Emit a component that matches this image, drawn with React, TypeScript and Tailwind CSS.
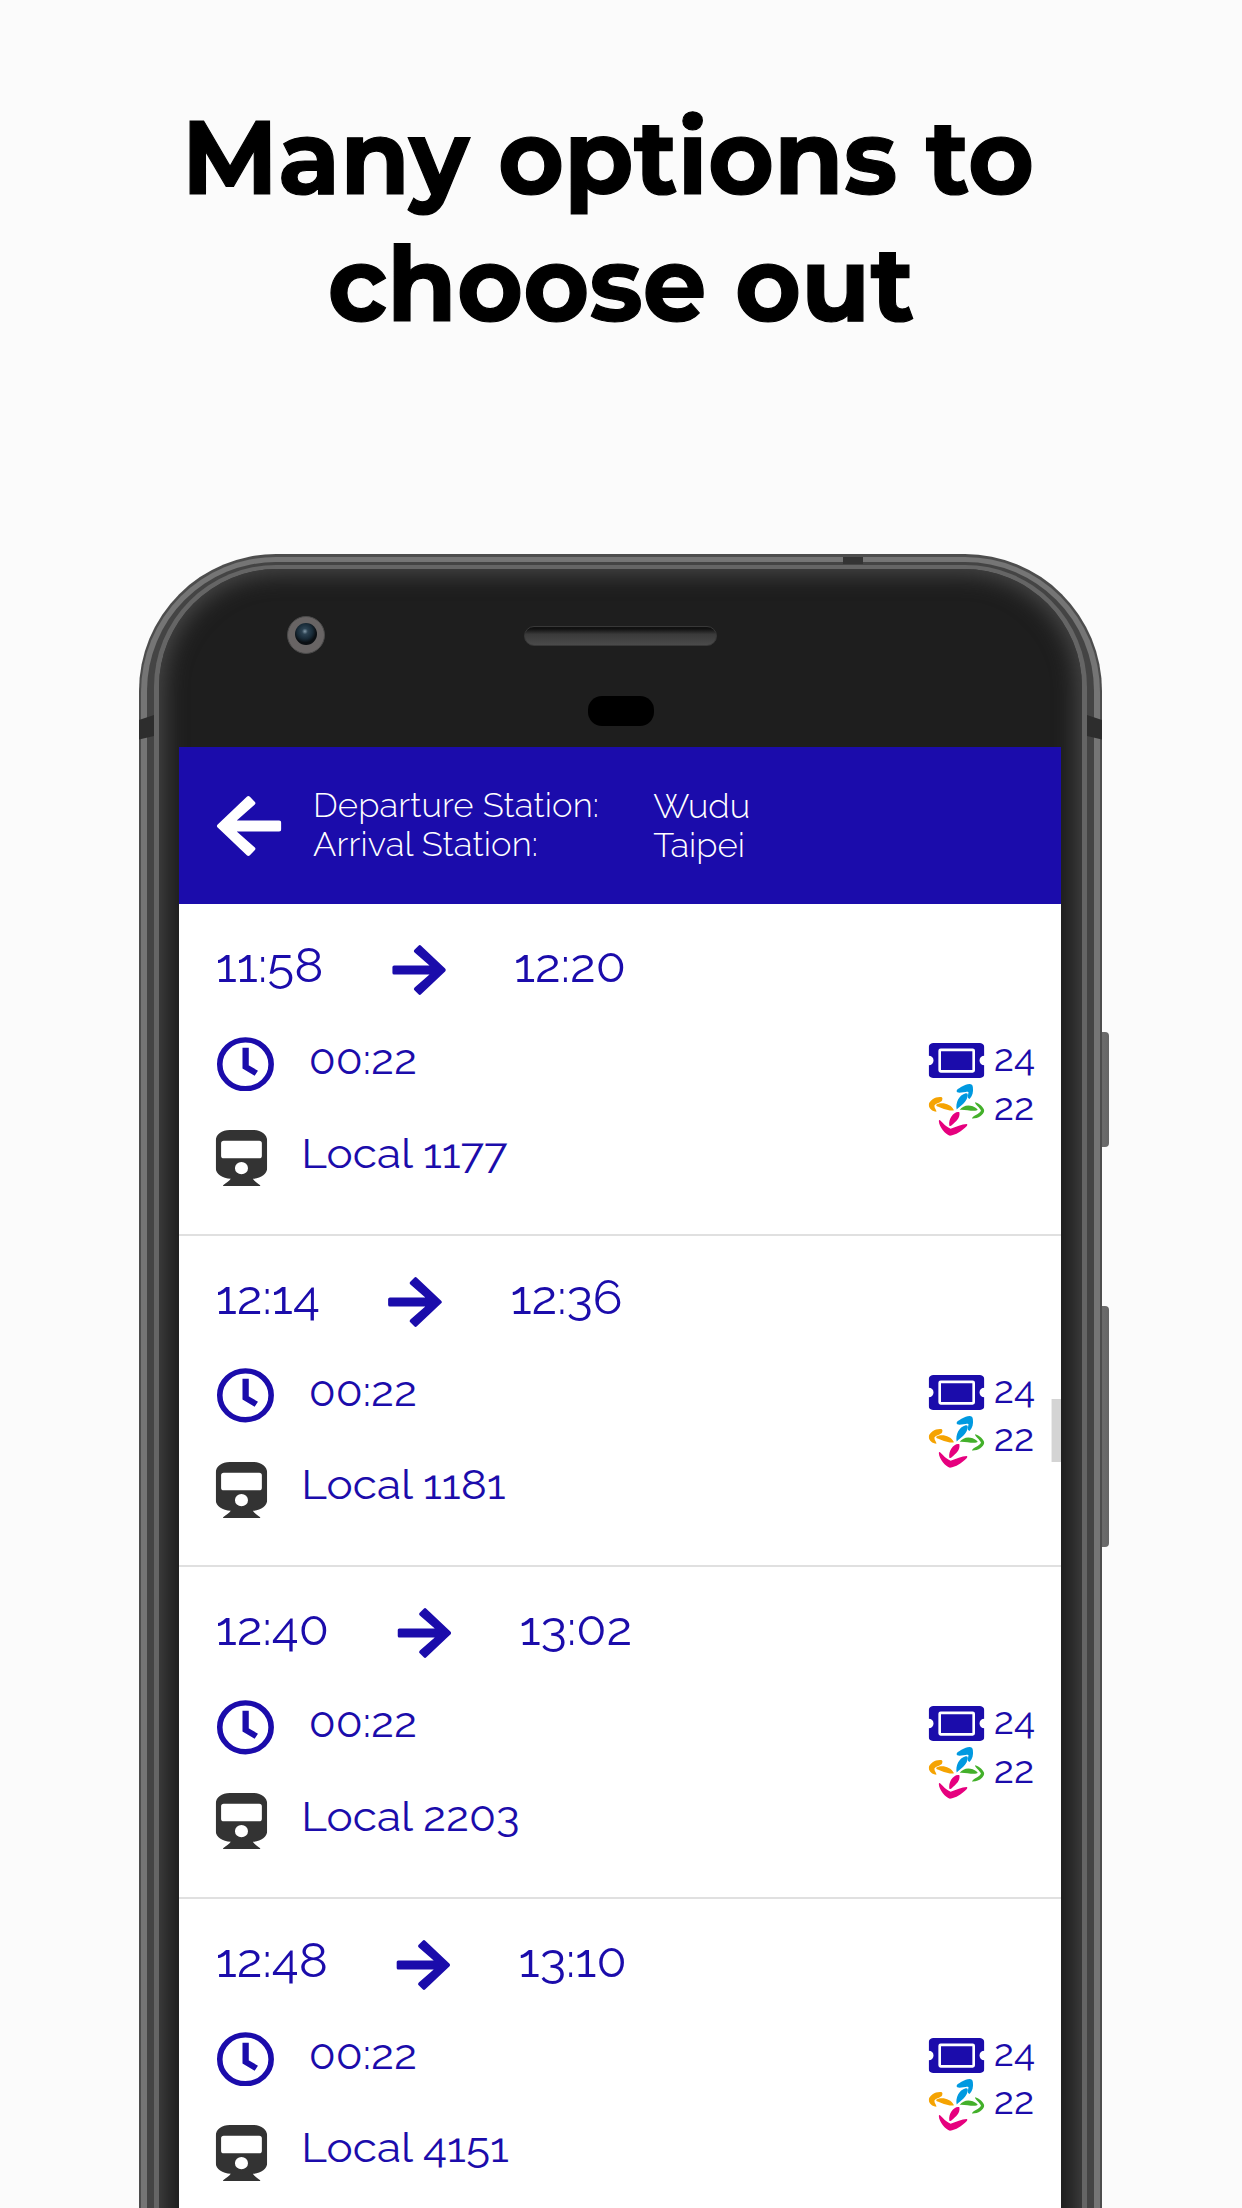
import React from 'react';

type Trip = { depart: string; arrive: string; duration: string; train: string; ticket: number; card: number };

const trips: Trip[] = [
  { depart: '11:58', arrive: '12:20', duration: '00:22', train: 'Local 1177', ticket: 24, card: 22 },
  { depart: '12:14', arrive: '12:36', duration: '00:22', train: 'Local 1181', ticket: 24, card: 22 },
  { depart: '12:40', arrive: '13:02', duration: '00:22', train: 'Local 2203', ticket: 24, card: 22 },
  { depart: '12:48', arrive: '13:10', duration: '00:22', train: 'Local 4151', ticket: 24, card: 22 },
];

function Arrow({ className }: { className: string }) {
  return (
    <svg viewBox="0 0 162 150" preserveAspectRatio="none" className={className} aria-hidden="true">
      <path
        d="M83 6L156 75L83 144L71 132L127 83H6V67H127L71 18Z"
        fill="currentColor"
        stroke="currentColor"
        strokeWidth="11"
        strokeLinejoin="round"
      />
    </svg>
  );
}

function Clock() {
  return (
    <svg viewBox="0 0 164 164" className="ml-px h-[54.6px] w-[54.6px] shrink-0" fill="none" stroke="currentColor" aria-hidden="true">
      <circle cx="82" cy="82" r="73.5" strokeWidth="16" />
      <path d="M82.500 32V90L113 109" strokeWidth="18" />
    </svg>
  );
}

function Train() {
  return (
    <svg viewBox="0 0 154 168" preserveAspectRatio="none" className="h-14 w-[49px] shrink-0" aria-hidden="true">
      <path
        fill="#333333"
        fillRule="evenodd"
        d="M42 0H112C136 0 154 13 154 32V114C154 132 134 146 111 146C115 153 124 158 133 166V168H22V166C31 158 40 153 45 146C20 146 0 132 0 114V32C0 13 18 0 42 0ZM24 32Q16 32 16 40V77Q16 85 24 85H130Q138 85 138 77V40Q138 32 130 32ZM77 96A19.500 18.500 0 1 0 77 133A19.500 18.500 0 1 0 77 96Z"
      />
    </svg>
  );
}

function Ticket() {
  return (
    <svg viewBox="0 0 167 105" preserveAspectRatio="none" className="h-[35px] w-[53px] shrink-0" aria-hidden="true">
      <path
        fill="currentColor"
        d="M13 0H154Q167 2 167 13V38A14 14 0 0 0 167 67V92Q167 103 154 105H13Q0 103 0 92V67A14 14 0 0 0 0 38V13Q0 2 13 0Z"
      />
      <rect x="33" y="20.500" width="102" height="64.500" rx="3" fill="none" stroke="#fff" strokeWidth="8" />
    </svg>
  );
}

function CardLogo() {
  return (
    <svg viewBox="27 150 165 157" preserveAspectRatio="none" className="h-[52px] w-[53px] shrink-0" aria-hidden="true">
      <g fill="#0099e0">
        <path d="M111 167C121 161 132 151 148 150Q157 150 158 160C160 174 157 186 148 195Q142 194 143 188L145 174C137 171 126 178 113 176Q107 172 111 167Z" />
        <path d="M110 227C106 208 116 183 137 178Q144 177 143 185C140 204 125 214 110 227Z" />
      </g>
      <g fill="#43b02a">
        <path d="M164 205C178 209 189 219 192 230C189 245 173 255 155 254C160 244 176 242 182 231C179 220 165 214 164 205Z" />
        <path d="M119 228C130 214 150 209 172 226Q173 230 165 231C150 232 135 227 119 228Z" />
      </g>
      <g fill="#f5a302">
        <path d="M66 190C48 187 30 199 27 212C27 224 38 233 50 234C50 228 43 222 44 215C48 207 63 207 67 199Q69 192 66 190Z" />
        <path d="M50 212C65 204 91 208 102 229C88 233 65 222 51 217Q48 215 50 212Z" />
      </g>
      <g fill="#e6007e">
        <path d="M118 235C104 230 85 252 88 275Q91 279 96 274C108 262 121 253 118 235Z" />
        <path d="M58 259C65 260 73 278 92 285C108 280 125 271 140 271Q144 273 138 279C125 292 108 304 90 306C77 303 58 281 57 262Z" />
      </g>
    </svg>
  );
}

function TripRow({ trip }: { trip: Trip }) {
  return (
    <li className="flex h-[331.67px] justify-between border-b-[2.500px] border-[#e0e0e0] pl-[35px] pr-6 pt-[19px]">
      <div className="flex flex-col">
        <div className="flex h-[94px] items-center text-[47px]">
          <span className="pb-[9px]">{trip.depart}</span>
          <Arrow className="mx-[65px] h-[50px] w-[51.400px] shrink-0" />
          <span className="pb-[9px]">{trip.arrive}</span>
        </div>
        <div className="flex h-[94px] items-center text-[42px]">
          <Clock />
          <span className="pb-2 pl-[33px]">{trip.duration}</span>
        </div>
        <div className="flex h-[94px] items-center text-[42px]">
          <Train />
          <span className="pb-[9px] pl-[32.500px]">{trip.train}</span>
        </div>
      </div>
      <div className="flex flex-col pt-[116px] text-[37px]">
        <div className="flex h-[43px] items-center gap-[9px]">
          <Ticket />
          <span className="w-10 pb-1">{trip.ticket}</span>
        </div>
        <div className="flex h-[56px] items-center gap-[9px]">
          <CardLogo />
          <span className="w-10 pb-[6px]">{trip.card}</span>
        </div>
      </div>
    </li>
  );
}

function Screen() {
  return (
    <div className="relative h-[1530px] w-[840px] origin-left scale-x-105 bg-white font-['Raleway','Lato',sans-serif] leading-none text-[#1b0cab]">
      <header className="flex h-[157px] items-start bg-[#1b0cab] pl-9 text-[33px] font-light leading-[38.500px] text-white">
        <Arrow className="mt-[49px] h-[60px] w-[61.600px] shrink-0 -scale-x-100" />
        <div className="w-[322px] shrink-0 pl-[30px] pt-10 tracking-[0.15px]">
          <p className="whitespace-nowrap">Departure Station:</p>
          <p className="whitespace-nowrap">Arrival Station:</p>
        </div>
        <div className="pl-8 pt-[41px]">
          <p>Wudu</p>
          <p>Taipei</p>
        </div>
      </header>
      <ul>
        {trips.map((trip) => (
          <TripRow key={trip.train} trip={trip} />
        ))}
      </ul>
      <div className="absolute right-0 top-[652px] h-[63px] w-[9.500px] bg-[#d4d4d4]" />
    </div>
  );
}

function Phone() {
  return (
    <div className="relative ml-[139px] h-[1720px] w-[963px] shrink-0">
      <div className="absolute -right-[7px] top-[478px] h-[115px] w-3 rounded-[4px] bg-linear-to-r from-[#555] via-[#6c6c6c] to-[#666]" />
      <div className="absolute -right-[7px] top-[752px] h-[241px] w-3 rounded-[4px] bg-linear-to-r from-[#555] via-[#6c6c6c] to-[#666]" />
      <div className="relative h-full rounded-t-[137px] bg-[#4d4d4d] px-[2px] pt-[3px]">
        <div className="h-full rounded-t-[135px] bg-[#757575] px-[6px] pt-[5px]">
          <div className="h-full rounded-t-[129px] bg-[#444] px-[7px] pt-[3px]">
            <div className="h-full rounded-t-[122px] bg-[#656565] px-[5px] pt-1">
              <div className="h-full rounded-t-[118px] bg-[#1e1e1e] px-5 pt-[178px] shadow-[inset_0_0_22px_5px_#484848]">
                <Screen />
              </div>
            </div>
          </div>
        </div>
        <svg viewBox="0 0 15 25" className="absolute left-0 top-[161px] h-[25px] w-[15px]" aria-hidden="true">
          <path d="M0 5L15 0V21L0 24.500Z" fill="#2d2d2d" />
        </svg>
        <svg viewBox="0 0 15 25" className="absolute right-0 top-[161px] h-[25px] w-[15px] -scale-x-100" aria-hidden="true">
          <path d="M0 5L15 0V21L0 24.500Z" fill="#2d2d2d" />
        </svg>
        <div className="absolute left-[704px] top-[3px] h-[7px] w-5 bg-[#343434]" />
        <div className="absolute left-[148px] top-[62px] flex h-[38px] w-[38px] items-center justify-center rounded-full border border-[#4a4a4a] bg-[#686464]">
          <div className="mb-[3px] h-[22px] w-[22px] rounded-full bg-[radial-gradient(circle_at_45%_38%,#8299a8_0,#2c4252_16%,#182a37_42%,#0a0e12_62%)]" />
        </div>
        <div className="absolute left-[385px] top-[72px] h-5 w-[193px] rounded-full border border-[#383838] bg-linear-to-b from-[#111] from-10% via-[#3a3a3a] via-40% to-[#4a4a4a]" />
        <div className="absolute left-[449px] top-[142px] h-[30px] w-[66px] rounded-[14px] bg-black" />
      </div>
    </div>
  );
}

export default function App() {
  return (
    <main className="flex h-[2208px] w-[1242px] flex-col overflow-hidden bg-[#fbfbfb]">
      <h1 className="h-[554px] shrink-0 pt-[93px] text-center font-['Montserrat','Inter',sans-serif] text-[104px] font-bold leading-[127.300px] text-black [-webkit-text-stroke:1.200px_#000]">
        <span className="block scale-x-[0.97] pr-[27px]">Many options to</span>
        <span className="block scale-x-[0.97]">choose out</span>
      </h1>
      <Phone />
    </main>
  );
}
